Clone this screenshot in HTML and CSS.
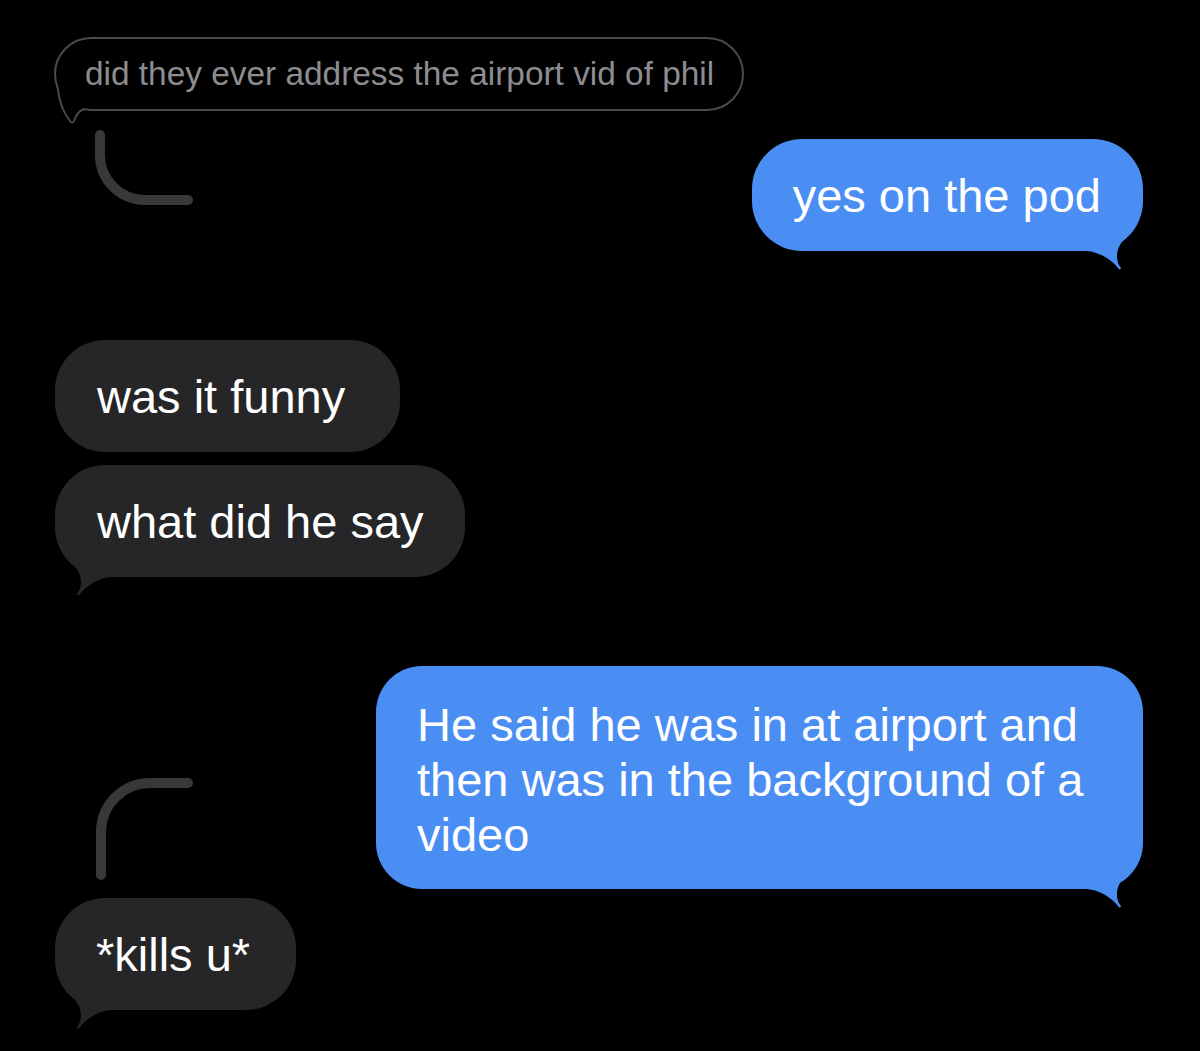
FILE: index.html
```html
<!DOCTYPE html>
<html lang="en">
<head>
<meta charset="utf-8">
<title>Messages</title>
<link rel="stylesheet" href="styles.css">
</head>
<body>
<main class="thread">
  <div class="quote">
    did they ever address the airport vid of phil
    <svg class="quote-tail" width="40" height="50" viewBox="0 0 40 50" aria-hidden="true">
      <path class="quote-tail-fill" d="M3.8 9 C5 22 8 32 16 42 Q18 45 20 42 C22 36 25 32 29 30.5 L29 18 L10 6 Z"/>
      <path class="quote-tail-line" d="M3.8 9 C5 22 8 32 16 42 Q18 45 20 42 C22 36 25 32 29 30.5"/>
    </svg>
  </div>

  <div class="row row-b">
    <svg class="connector connector-down" width="145" height="80" viewBox="0 0 145 80" aria-hidden="true">
      <path d="M46 7 V27 A45 45 0 0 0 91 72 H134"/>
    </svg>
    <div class="bubble out out-first">
      yes on the pod
      <svg class="tail tail-right" width="70" height="70" viewBox="0 0 70 70" aria-hidden="true">
        <path d="M10 40 L14 50 C26 51 38 58 45 67 Q47 70 48 67 C42 60 42 46 53 37 L40 20 Z"/>
      </svg>
    </div>
  </div>

  <div class="bubble in in-funny">was it funny</div>
  <div class="bubble in in-say">
    what did he say
    <svg class="tail tail-left" width="70" height="70" viewBox="0 0 70 70" aria-hidden="true">
      <path d="M10 40 L14 50 C26 51 38 58 45 67 Q47 70 48 67 C42 60 42 46 53 37 L40 20 Z"/>
    </svg>
  </div>

  <div class="row row-c">
    <svg class="connector connector-up" width="145" height="106" viewBox="0 0 145 106" aria-hidden="true">
      <path d="M134 8 H96 A49 49 0 0 0 47 57 V100"/>
    </svg>
    <div class="bubble out out-long">
      He said he was in at airport and then was in the background of a video
      <svg class="tail tail-right" width="70" height="70" viewBox="0 0 70 70" aria-hidden="true">
        <path d="M10 40 L14 50 C26 51 38 58 45 67 Q47 70 48 67 C42 60 42 46 53 37 L40 20 Z"/>
      </svg>
    </div>
  </div>

  <div class="bubble in in-kills">
    *kills u*
    <svg class="tail tail-left" width="70" height="70" viewBox="0 0 70 70" aria-hidden="true">
      <path d="M10 40 L14 50 C26 51 38 58 45 67 Q47 70 48 67 C42 60 42 46 53 37 L40 20 Z"/>
    </svg>
  </div>
</main>
</body>
</html>
```

FILE: styles.css
```css
html, body {
  margin: 0;
  background: #000;
}

body {
  height: 1051px;
  overflow: hidden;
  font-family: "Liberation Sans", Arial, sans-serif;
}

.thread {
  display: flex;
  flex-direction: column;
  align-items: flex-start;
  padding: 37px 57px 0 54px;
}

/* quoted reply bubble */
.quote {
  position: relative;
  box-sizing: border-box;
  height: 74px;
  padding: 16px 28px 16px 29px;
  border: 2px solid #4a4a4c;
  border-radius: 37px;
  color: #8d8d91;
  font-size: 33.4px;
  line-height: 38px;
  white-space: nowrap;
}

.quote-tail {
  position: absolute;
  left: -2px;
  top: 40px;
  overflow: visible;
}

.quote-tail-fill {
  fill: #000;
}

.quote-tail-line {
  fill: none;
  stroke: #4a4a4c;
  stroke-width: 2;
  stroke-linecap: round;
  stroke-linejoin: round;
}

/* rows with a thread connector beside a bubble */
.row {
  display: flex;
  justify-content: space-between;
  align-items: flex-start;
  align-self: stretch;
}

.row-b {
  margin-top: 17px;
}

.row-c {
  margin-top: 89px;
}

.connector {
  display: block;
  flex: none;
}

.connector path {
  fill: none;
  stroke: #38383a;
  stroke-width: 10;
  stroke-linecap: round;
}

.connector-up {
  margin-top: 109px;
}

/* message bubbles */
.bubble {
  position: relative;
  box-sizing: border-box;
  padding: 29px 43px 28px 42px;
  border-radius: 50px;
  color: #fff;
  font-size: 47px;
  line-height: 55px;
  white-space: nowrap;
}

.bubble.out {
  background: #4a8ef4;
}

.bubble.in {
  background: #262628;
  margin-left: 1px;
}

.out-first {
  margin-top: 11px;
  padding-left: 41px;
  padding-right: 42px;
}

.in-funny {
  margin-top: 89px;
  padding-right: 55px;
}

.in-say {
  margin-top: 13px;
  padding-right: 41px;
}

.out-long {
  width: 767px;
  padding: 31px 42px 27px 41px;
  border-radius: 46px;
  white-space: normal;
}

.in-kills {
  margin-top: 9px;
  margin-left: 2px;
  padding-left: 41px;
  padding-right: 46px;
}

.tail {
  position: absolute;
  bottom: -20px;
}

.tail-right {
  right: 0;
}

.tail-left {
  left: 0;
  transform: scaleX(-1);
}

.out .tail path {
  fill: #4a8ef4;
}

.in .tail path {
  fill: #262628;
}
```
